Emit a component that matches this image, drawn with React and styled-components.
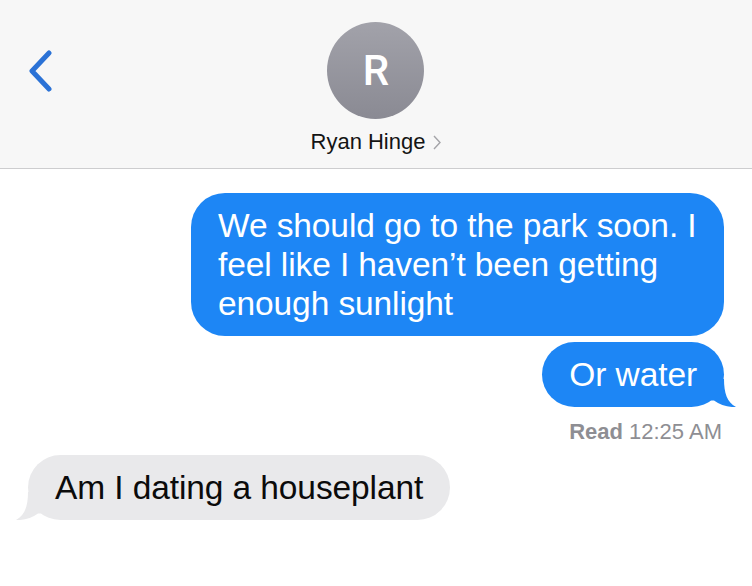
import styled, { createGlobalStyle } from "styled-components"

const GlobalStyle = createGlobalStyle`
    html, body {
        margin: 0;
        padding: 0;
        background: #ffffff;
    }
    body {
        font-family: "Liberation Sans", Helvetica, Arial, sans-serif;
        -webkit-font-smoothing: antialiased;
    }
`

const BLUE = "#1d86f5"
const GRAY = "#e9e9eb"

const Screen = styled.div`
    width: 752px;
    height: 586px;
    overflow: hidden;
    background: #fff;
`

const Header = styled.header`
    display: grid;
    grid-template-columns: 1fr auto 1fr;
    height: 168px;
    background: #f7f7f7;
    border-bottom: 1px solid #cdcdcf;
`

const BackButton = styled.button`
    justify-self: start;
    align-self: start;
    margin: 50px 0 0 27px;
    padding: 0;
    border: none;
    background: none;
    width: 28px;
    height: 42px;
    display: flex;
`

const Contact = styled.div`
    display: flex;
    flex-direction: column;
    align-items: center;
    padding-top: 22px;
`

const Avatar = styled.div`
    width: 97px;
    height: 97px;
    border-radius: 50%;
    background: linear-gradient(#a2a2aa, #8a8a93);
    display: flex;
    align-items: center;
    justify-content: center;
    color: #fff;
    font-size: 42px;
    font-weight: 500;
    font-family: Roboto, "Liberation Sans", Arial, sans-serif;
`

const Name = styled.div`
    margin-top: 10px;
    display: flex;
    align-items: center;
    gap: 8px;
    font-size: 22px;
    color: #141414;
`

const Thread = styled.div`
    display: flex;
    flex-direction: column;
    padding: 24px 28px 0 28px;
`

const Bubble = styled.div`
    position: relative;
    align-self: ${(p) => (p.$mine ? "flex-end" : "flex-start")};
    max-width: 533px;
    box-sizing: border-box;
    padding: 13px 27px;
    margin-top: ${(p) => p.$top || 0}px;
    border-radius: 34px;
    background: ${(p) => (p.$mine ? BLUE : GRAY)};
    color: ${(p) => (p.$mine ? "#fff" : "#0b0b0b")};
    font-size: 33.5px;
    line-height: 39px;
    letter-spacing: -0.1px;
`

const Tail = styled.svg`
    position: absolute;
    bottom: 0;
    width: 30px;
    height: 28px;
    ${(p) => (p.$mine ? "right: -12px;" : "left: -12px; transform: scaleX(-1);")}
`

const Receipt = styled.div`
    align-self: flex-end;
    margin: 12px 2px 0 0;
    font-size: 22px;
    color: #8e8e93;
    & b {
        font-weight: bold;
    }
`

const BubbleTail = ({ mine }) => (
    <Tail $mine={mine} viewBox="0 0 30 28">
        <path
            d="M0 0 L18 0 C18 14 21 23 30 28 C22 28.5 14 26 8 21.5 L0 21.5 Z"
            fill={mine ? BLUE : GRAY}
        />
    </Tail>
)

const Message = ({ mine, tail, top, children }) => (
    <Bubble $mine={mine} $top={top}>
        {children}
        {tail && <BubbleTail mine={mine} />}
    </Bubble>
)

const App = () => {
    return (
        <Screen>
            <GlobalStyle />
            <Header>
                <BackButton aria-label="Back">
                    <svg width="28" height="42" viewBox="0 0 28 42">
                        <path d="M22 3 L5 21 L22 39" fill="none" stroke="#2b72d6" strokeWidth="5" strokeLinecap="round" strokeLinejoin="round" />
                    </svg>
                </BackButton>
                <Contact>
                    <Avatar>R</Avatar>
                    <Name>
                        Ryan Hinge
                        <svg width="8" height="15" viewBox="0 0 8 15">
                            <path d="M1 1 L7 7.5 L1 14" fill="none" stroke="#a4a4a8" strokeWidth="1.4" />
                        </svg>
                    </Name>
                </Contact>
                <div />
            </Header>
            <Thread>
                <Message mine>
                    We should go to the park soon. I feel like I haven’t been getting enough sunlight
                </Message>
                <Message mine tail top={6}>Or water</Message>
                <Receipt><b>Read</b> 12:25 AM</Receipt>
                <Message tail top={10}>Am I dating a houseplant</Message>
            </Thread>
        </Screen>
    )
}

export default App
